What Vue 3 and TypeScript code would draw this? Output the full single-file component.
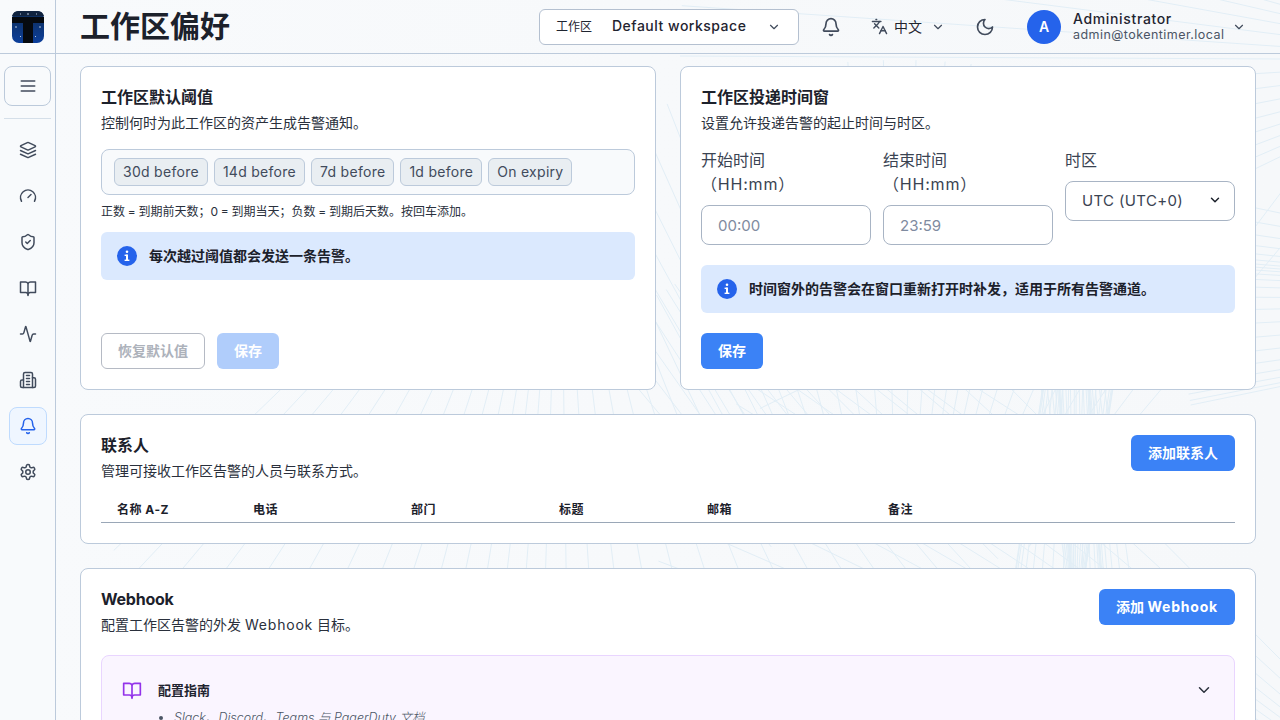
<script setup lang="ts">
const icons: Record<string, string[]> = {
  menu: ['M4 6h16', 'M4 12h16', 'M4 18h16'],
  layers: [
    'm12.83 2.18a2 2 0 0 0-1.66 0L2.6 6.08a1 1 0 0 0 0 1.83l8.58 3.91a2 2 0 0 0 1.66 0l8.58-3.9a1 1 0 0 0 0-1.83Z',
    'm22 17.65-9.17 4.16a2 2 0 0 1-1.66 0L2 17.65',
    'm22 12.65-9.17 4.16a2 2 0 0 1-1.66 0L2 12.65',
  ],
  gauge: ['m12 14 4-4', 'M3.34 19a10 10 0 1 1 17.32 0'],
  shield: [
    'M20 13c0 5-3.5 7.5-7.66 8.95a1 1 0 0 1-.67-.01C7.5 20.5 4 18 4 13V6a1 1 0 0 1 1-1c2 0 4.5-1.2 6.24-2.72a1.17 1.17 0 0 1 1.52 0C14.51 3.81 17 5 19 5a1 1 0 0 1 1 1z',
    'm9 12 2 2 4-4',
  ],
  book: [
    'M12 6v16',
    'M2 4h6a4 4 0 0 1 4 2 4 4 0 0 1 4-2h6v14h-7a3 3 0 0 0-3 3 3 3 0 0 0-3-3H2z',
  ],
  activity: [
    'M22 12h-2.48a2 2 0 0 0-1.93 1.46l-2.35 8.36a.25.25 0 0 1-.48 0L9.24 2.18a.25.25 0 0 0-.48 0l-2.35 8.36A2 2 0 0 1 4.49 12H2',
  ],
  building: [
    'M6 22V4a2 2 0 0 1 2-2h8a2 2 0 0 1 2 2v18Z',
    'M6 12H4a2 2 0 0 0-2 2v6a2 2 0 0 0 2 2h2',
    'M18 9h2a2 2 0 0 1 2 2v9a2 2 0 0 1-2 2h-2',
    'M10 6h4',
    'M10 10h4',
    'M10 14h4',
    'M10 18h4',
  ],
  bell: [
    'M10.268 21a2 2 0 0 0 3.464 0',
    'M3.262 15.326A1 1 0 0 0 4 17h16a1 1 0 0 0 .74-1.673C19.41 13.956 18 12.499 18 8A6 6 0 0 0 6 8c0 4.499-1.411 5.956-2.738 7.326',
  ],
  settings: [
    'M12.22 2h-.44a2 2 0 0 0-2 2v.18a2 2 0 0 1-1 1.73l-.43.25a2 2 0 0 1-2 0l-.15-.08a2 2 0 0 0-2.73.73l-.22.38a2 2 0 0 0 .73 2.73l.15.1a2 2 0 0 1 1 1.72v.51a2 2 0 0 1-1 1.74l-.15.09a2 2 0 0 0-.73 2.73l.22.38a2 2 0 0 0 2.73.73l.15-.08a2 2 0 0 1 2 0l.43.25a2 2 0 0 1 1 1.73V20a2 2 0 0 0 2 2h.44a2 2 0 0 0 2-2v-.18a2 2 0 0 1 1-1.73l.43-.25a2 2 0 0 1 2 0l.15.08a2 2 0 0 0 2.73-.73l.22-.39a2 2 0 0 0-.73-2.73l-.15-.08a2 2 0 0 1-1-1.74v-.5a2 2 0 0 1 1-1.74l.15-.09a2 2 0 0 0 .73-2.73l-.22-.38a2 2 0 0 0-2.73-.73l-.15.08a2 2 0 0 1-2 0l-.43-.25a2 2 0 0 1-1-1.73V4a2 2 0 0 0-2-2z',
    'M15 12a3 3 0 1 1-6 0 3 3 0 0 1 6 0z',
  ],
  languages: ['m5 8 6 6', 'm4 14 6-6 2-3', 'M2 5h12', 'M7 2h1', 'm22 22-5-10-5 10', 'M14 18h6'],
  moon: ['M12 3a6 6 0 0 0 9 9 9 9 0 1 1-9-9Z'],
  chevron: ['m6 9 6 6 6-6'],
}

const navItems = ['layers', 'gauge', 'shield', 'book', 'activity', 'building', 'bell', 'settings']
const chips = ['30d before', '14d before', '7d before', '1d before', 'On expiry']
const columns = ['名称 A-Z', '电话', '部门', '标题', '邮箱', '备注']

// Faint decorative line web behind the cards.
function webLines(): string[] {
  const out: string[] = []
  const fan = (cx: number, cy: number, n: number, from: number, to: number, inner: number, outer: number) => {
    for (let i = 0; i < n; i++) {
      const a = from + ((to - from) * i) / (n - 1)
      const wobble = Math.sin(i * 12.9898 + cx) * 0.03
      const c = Math.cos(a + wobble)
      const s = Math.sin(a + wobble)
      out.push(`M${(cx + c * inner).toFixed(1)} ${(cy + s * inner).toFixed(1)}L${(cx + c * outer).toFixed(1)} ${(cy + s * outer).toFixed(1)}`)
    }
  }
  fan(1075, 640, 22, -1.72, -1.42, 0, 520)
  fan(1075, 170, 22, 1.42, 1.72, 0, 520)
  fan(1500, 880, 18, 3.3, 3.95, 60, 900)
  fan(1480, 60, 14, 2.7, 3.4, 120, 800)
  fan(560, 120, 34, 0.55, 2.35, 200, 620)
  fan(900, 700, 30, -2.3, -0.9, 200, 640)
  fan(1700, 300, 22, 2.95, 3.35, 0, 520)
  return out
}
const lines = webLines()
</script>

<template>
  <div class="app">
    <svg class="web" width="1280" height="720" viewBox="0 0 1280 720" fill="none" aria-hidden="true">
      <path v-for="(d, i) in lines" :key="i" :d="d" stroke="#e2eef6" stroke-width="1" />
    </svg>

    <header class="topbar">
      <div class="brand">
        <svg width="32" height="32" viewBox="0 0 32 32" aria-label="TokenTimer">
          <defs>
            <linearGradient id="logoBlue" x1="0" y1="0" x2="0" y2="1">
              <stop offset="0" stop-color="#0f2c55" />
              <stop offset="1" stop-color="#0c3f9c" />
            </linearGradient>
          </defs>
          <rect width="32" height="32" rx="7" fill="url(#logoBlue)" />
          <path d="M7 0h18a7 7 0 0 1 7 5H0a7 7 0 0 1 7-5z" fill="#10233f" />
          <rect x="0" y="6" width="32" height="6" fill="#060a10" />
          <rect x="11" y="6" width="10" height="26" fill="#060a10" />
          <path d="M8 3h1M16 2v2M24 3h1M3 16h2M27 16h2M8 26l1-1M24 26l-1-1" stroke="#b7c8de" stroke-width="1" />
        </svg>
      </div>
      <h1 class="page-title">工作区偏好</h1>
      <div class="top-actions">
        <div class="ws-select">
          <span class="ws-label">工作区</span>
          <span class="ws-name">Default workspace</span>
          <svg class="ws-chev ic" width="14" height="14" viewBox="0 0 24 24"><path v-for="d in icons.chevron" :key="d" :d="d" /></svg>
        </div>
        <svg class="ic bell-ic" width="20" height="20" viewBox="0 0 24 24"><path v-for="d in icons.bell" :key="d" :d="d" /></svg>
        <div class="lang">
          <svg class="ic" width="17" height="17" viewBox="0 0 24 24"><path v-for="d in icons.languages" :key="d" :d="d" /></svg>
          <span>中文</span>
          <svg class="ic" width="14" height="14" viewBox="0 0 24 24"><path v-for="d in icons.chevron" :key="d" :d="d" /></svg>
        </div>
        <svg class="ic moon-ic" width="20" height="20" viewBox="0 0 24 24"><path v-for="d in icons.moon" :key="d" :d="d" /></svg>
        <div class="avatar">A</div>
        <div class="user">
          <div class="user-name">Administrator</div>
          <div class="user-mail">admin@tokentimer.local</div>
        </div>
        <svg class="ic user-chev" width="14" height="14" viewBox="0 0 24 24"><path v-for="d in icons.chevron" :key="d" :d="d" /></svg>
      </div>
    </header>

    <div class="below">
      <nav class="rail">
        <button class="toggle" type="button" aria-label="menu">
          <svg class="ic" width="20" height="20" viewBox="0 0 24 24"><path v-for="d in icons.menu" :key="d" :d="d" /></svg>
        </button>
        <div class="rail-sep"></div>
        <div class="rail-items">
          <div v-for="name in navItems" :key="name" class="rail-item" :class="{ active: name === 'bell' }">
            <svg class="ic" width="18" height="18" viewBox="0 0 24 24"><path v-for="d in icons[name]" :key="d" :d="d" /></svg>
          </div>
        </div>
      </nav>

      <main class="content">
        <div class="two-col">
          <section class="card col-card">
            <h2>工作区默认阈值</h2>
            <p class="sub">控制何时为此工作区的资产生成告警通知。</p>
            <div class="chip-box">
              <span v-for="c in chips" :key="c" class="chip">{{ c }}</span>
            </div>
            <p class="hint">正数 = 到期前天数；0 = 到期当天；负数 = 到期后天数。按回车添加。</p>
            <div class="alert first">
              <svg width="20" height="20" viewBox="0 0 20 20"><circle cx="10" cy="10" r="10" fill="#2563eb" /><rect x="9" y="8.6" width="2" height="6" fill="#fff" /><rect x="7.6" y="8.6" width="3" height="1.4" fill="#fff" /><rect x="7.6" y="13.6" width="4.8" height="1.4" fill="#fff" /><circle cx="10" cy="5.8" r="1.3" fill="#fff" /></svg>
              <span>每次越过阈值都会发送一条告警。</span>
            </div>
            <div class="actions push">
              <button class="btn ghost" type="button">恢复默认值</button>
              <button class="btn primary dim" type="button">保存</button>
            </div>
          </section>

          <section class="card col-card">
            <h2>工作区投递时间窗</h2>
            <p class="sub">设置允许投递告警的起止时间与时区。</p>
            <div class="form-grid">
              <label class="field">
                <span class="lab">开始时间<br /><span class="hhmm">（HH:mm）</span></span>
                <span class="input ph">00:00</span>
              </label>
              <label class="field">
                <span class="lab">结束时间<br /><span class="hhmm">（HH:mm）</span></span>
                <span class="input ph">23:59</span>
              </label>
              <label class="field">
                <span class="lab">时区</span>
                <span class="input sel">
                  <span class="utc">UTC (UTC+0)</span>
                  <svg class="ic strong" width="14" height="14" viewBox="0 0 24 24"><path v-for="d in icons.chevron" :key="d" :d="d" /></svg>
                </span>
              </label>
            </div>
            <div class="alert">
              <svg width="20" height="20" viewBox="0 0 20 20"><circle cx="10" cy="10" r="10" fill="#2563eb" /><rect x="9" y="8.6" width="2" height="6" fill="#fff" /><rect x="7.6" y="8.6" width="3" height="1.4" fill="#fff" /><rect x="7.6" y="13.6" width="4.8" height="1.4" fill="#fff" /><circle cx="10" cy="5.8" r="1.3" fill="#fff" /></svg>
              <span>时间窗外的告警会在窗口重新打开时补发，适用于所有告警通道。</span>
            </div>
            <div class="actions">
              <button class="btn primary" type="button">保存</button>
            </div>
          </section>
        </div>

        <section class="card">
          <div class="card-head">
            <div>
              <h2>联系人</h2>
              <p class="sub">管理可接收工作区告警的人员与联系方式。</p>
            </div>
            <button class="btn primary" type="button">添加联系人</button>
          </div>
          <div class="thead">
            <span v-for="c in columns" :key="c">{{ c }}</span>
          </div>
        </section>

        <section class="card">
          <div class="card-head">
            <div>
              <h2 class="hook-title">Webhook</h2>
              <p class="sub">配置工作区告警的外发 <span class="hook">Webhook</span> 目标。</p>
            </div>
            <button class="btn primary" type="button">添加 <span class="hook">Webhook</span></button>
          </div>
          <div class="guide">
            <div class="guide-head">
              <svg class="ic purple" width="20" height="20" viewBox="0 0 24 24"><path v-for="d in icons.book" :key="d" :d="d" /></svg>
              <span class="guide-title">配置指南</span>
              <svg class="ic guide-chev" width="18" height="18" viewBox="0 0 24 24"><path v-for="d in icons.chevron" :key="d" :d="d" /></svg>
            </div>
            <ul>
              <li>Slack、Discord、Teams 与 PagerDuty 文档</li>
            </ul>
          </div>
        </section>
      </main>
    </div>
  </div>
</template>

<style>
html,
body {
  margin: 0;
  height: 100%;
  overflow: hidden;
  background: #f7f9fb;
}
</style>

<style scoped>
.app {
  position: relative;
  width: 1280px;
  height: 720px;
  overflow: hidden;
  display: flex;
  flex-direction: column;
  background: linear-gradient(90deg, #f8fafc 0, #f6f8fa 100%);
  color: #1f2430;
  font-family: Inter, "Noto Sans CJK SC", "Noto Sans", sans-serif;
}
.web {
  position: absolute;
  left: 0;
  top: 0;
}
.ic {
  fill: none;
  stroke: #414b5c;
  stroke-width: 2;
  stroke-linecap: round;
  stroke-linejoin: round;
  flex: none;
}
.topbar {
  position: relative;
  height: 53px;
  flex: none;
  display: flex;
  align-items: center;
  border-bottom: 1px solid #bccadb;
  box-sizing: content-box;
}
.brand {
  width: 55px;
  height: 53px;
  flex: none;
  border-right: 1px solid #bccadb;
  display: flex;
  align-items: center;
  justify-content: center;
  box-sizing: content-box;
}
.page-title {
  margin: 0 0 1px 24px;
  font-size: 30px;
  line-height: 40px;
  font-weight: 700;
  color: #1c212b;
}
.top-actions {
  margin-left: auto;
  display: flex;
  align-items: center;
  padding-right: 34px;
}
.ws-select {
  width: 260px;
  height: 36px;
  box-sizing: border-box;
  background: #fff;
  border: 1px solid #b4c0d0;
  border-radius: 6px;
  display: flex;
  align-items: center;
  padding: 0 17px 0 16px;
  margin-right: 22px;
}
.ws-label {
  font-size: 12px;
  width: 56px;
  flex: none;
  color: #1f2430;
  padding-bottom: 2px;
}
.ws-name {
  font-size: 14px;
  font-weight: 500;
  letter-spacing: 0.5px;
  padding-bottom: 2px;
}
.ws-chev {
  margin-left: auto;
}
.lang {
  display: flex;
  align-items: center;
  gap: 6px;
  margin: 0 30px 0 30px;
  font-size: 14px;
}
.lang span {
  margin-right: 3px;
  padding-bottom: 2px;
}
.avatar {
  width: 34px;
  height: 34px;
  margin-left: 32px;
  border-radius: 50%;
  background: #2563eb;
  color: #fff;
  font-size: 14px;
  font-weight: 600;
  display: flex;
  align-items: center;
  justify-content: center;
}
.user {
  margin-left: 12px;
  width: 159px;
}
.user-name {
  font-size: 14px;
  line-height: 17px;
  font-weight: 500;
  letter-spacing: 0.65px;
}
.user-mail {
  font-size: 12.5px;
  line-height: 16px;
  color: #4b5565;
  letter-spacing: 0.45px;
}
.below {
  position: relative;
  flex: 1;
  min-height: 0;
  display: flex;
}
.rail {
  width: 55px;
  flex: none;
  box-sizing: content-box;
  border-right: 1px solid #bccadb;
  padding-top: 12px;
  display: flex;
  flex-direction: column;
  align-items: center;
  background: #f8fafc;
}
.toggle {
  width: 47px;
  height: 40px;
  padding: 0;
  border: 1px solid #bccadb;
  border-radius: 8px;
  background: #f8fafc;
  display: flex;
  align-items: center;
  justify-content: center;
}
.rail-sep {
  width: 47px;
  height: 1px;
  background: #d5dfe9;
  margin: 12px 0 12px;
}
.rail-items {
  display: flex;
  flex-direction: column;
  gap: 8px;
}
.rail-item {
  width: 38px;
  height: 38px;
  box-sizing: border-box;
  border-radius: 8px;
  border: 1px solid transparent;
  display: flex;
  align-items: center;
  justify-content: center;
}
.rail-item.active {
  background: #eff6ff;
  border-color: #bfdbfe;
}
.rail-item.active .ic {
  stroke: #2563eb;
}
.content {
  position: relative;
  flex: 1;
  min-width: 0;
  padding: 12px 24px 0;
  display: flex;
  flex-direction: column;
  gap: 24px;
}
.two-col {
  display: grid;
  grid-template-columns: 1fr 1fr;
  gap: 24px;
}
.card {
  background: #fff;
  border: 1px solid #bccadb;
  border-radius: 8px;
  padding: 20px;
  flex: none;
}
.col-card {
  display: flex;
  flex-direction: column;
  min-height: 0;
}
h2 {
  margin: 0;
  font-size: 16px;
  line-height: 20px;
  font-weight: 700;
  color: #1c212b;
}
.hook-title {
  letter-spacing: -0.25px;
}
.hook {
  letter-spacing: 0.8px;
}
.sub {
  margin: 6px 0 0;
  font-size: 14px;
  line-height: 20px;
  color: #2a303c;
}
.chip-box {
  margin-top: 16px;
  height: 46px;
  box-sizing: border-box;
  border: 1px solid #bccadb;
  border-radius: 8px;
  background: #f8fafc;
  display: flex;
  align-items: center;
  gap: 6px;
  padding: 0 12px;
}
.chip {
  height: 28px;
  box-sizing: border-box;
  padding: 0 8px;
  border: 1px solid #bccadb;
  border-radius: 6px;
  background: #e9eef2;
  font-size: 14px;
  line-height: 25px;
  letter-spacing: 0.28px;
  color: #414b5c;
}
.hint {
  margin: 8px 0 0;
  font-size: 12px;
  line-height: 18px;
  word-spacing: -0.6px;
  color: #2a303c;
}
.alert {
  margin-top: 12px;
  height: 48px;
  box-sizing: border-box;
  padding: 0 16px;
  border-radius: 6px;
  background: #dbe9fe;
  display: flex;
  align-items: center;
  gap: 12px;
  font-size: 14px;
  font-weight: 600;
  color: #1c212b;
}
.alert span {
  margin-bottom: 2px;
}
.alert.first {
  margin-top: 11px;
}
.actions {
  margin-top: 20px;
  display: flex;
  gap: 12px;
}
.actions.push {
  margin-top: auto;
}
.btn {
  height: 36px;
  padding: 0 16px 2px;
  border: 1px solid transparent;
  border-radius: 6px;
  font-family: inherit;
  font-size: 14px;
  font-weight: 700;
  flex: none;
}
.btn.primary {
  background: #3b82f6;
  color: #fff;
}
.btn.primary.dim {
  background: #b0cdfb;
}
.btn.ghost {
  background: #fff;
  border-color: #b5bac4;
  color: #adb2bb;
}
.form-grid {
  margin-top: 16px;
  display: grid;
  grid-template-columns: repeat(3, 1fr);
  gap: 12px;
  align-items: start;
}
.field {
  display: flex;
  flex-direction: column;
  gap: 9px;
}
.lab {
  margin-top: -1px;
  font-size: 16px;
  line-height: 24px;
  color: #3a4352;
}
.hhmm {
  letter-spacing: 0.8px;
}
.input {
  height: 40px;
  box-sizing: border-box;
  border: 1px solid #a8b4c4;
  border-radius: 8px;
  background: #fff;
  padding: 0 16px;
  font-size: 15px;
  display: flex;
  align-items: center;
}
.input.sel {
  justify-content: space-between;
  padding: 0 12px 2px 16px;
  color: #3a4352;
}
.utc {
  letter-spacing: 0.35px;
}
.input.ph {
  color: #7f8ba0;
}
.ic.strong {
  stroke: #1c212b;
  stroke-width: 2.5;
}
.form-grid + .alert {
  margin-top: 20px;
}
.card-head {
  display: flex;
  justify-content: space-between;
  align-items: flex-start;
}
.thead {
  margin-top: 16px;
  height: 25px;
  display: grid;
  grid-template-columns: 136px 158px 148px 148px 181px 1fr;
  border-bottom: 1px solid #9aa7b7;
  font-size: 12px;
  font-weight: 700;
  line-height: 26px;
  letter-spacing: 0.5px;
  color: #1c212b;
}
.thead span {
  padding-left: 16px;
}
.guide {
  margin-top: 20px;
  border: 1px solid #e9d5ff;
  border-radius: 8px;
  background: #faf5ff;
  padding: 24px 20px 0;
  height: 200px;
  box-sizing: border-box;
}
.guide-head {
  display: flex;
  align-items: center;
  height: 20px;
  gap: 16px;
}
.ic.purple {
  stroke: #9333ea;
}
.guide-title {
  font-size: 13px;
  font-weight: 700;
  margin-bottom: 2px;
}
.guide-chev {
  margin-left: auto;
  margin-right: 1px;
  stroke: #2a303c;
}
ul {
  margin: 8px 0 0;
  padding-left: 52px;
  font-size: 12.5px;
  line-height: 20px;
  font-style: italic;
  font-weight: 300;
  color: #4b5565;
}
</style>
